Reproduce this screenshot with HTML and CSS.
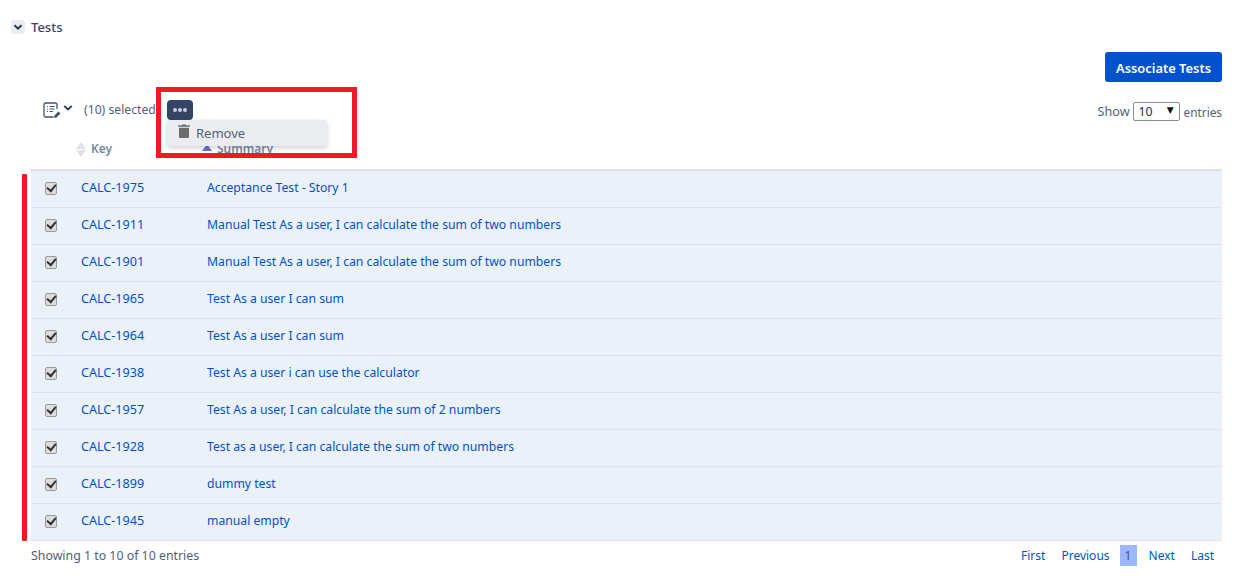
FILE: index.html
```html
<!DOCTYPE html>
<html lang="en">
<head>
<meta charset="utf-8">
<title>Tests</title>
<link rel="stylesheet" href="styles.css">
</head>
<body>
<main class="page">
  <header class="section-head">
    <span class="toggle"><svg width="10" height="10" viewBox="0 0 10 10"><path d="M1.500 3.200 5 6.700l3.500-3.500" fill="none" stroke="#253858" stroke-width="2"/></svg></span>
    <h2 class="section-title">Tests</h2>
  </header>
  <div class="actions"><button class="primary">Associate Tests</button></div>
  <div class="toolbar">
    <div class="bulk">
      <svg class="note-icon" width="18" height="17" viewBox="0 0 18 17"><path d="M10.500 15H2.500A1.500 1.500 0 0 1 1 13.500V2.500A1.500 1.500 0 0 1 2.500 1h10A1.500 1.500 0 0 1 14 2.500V7" fill="none" stroke="#42526e" stroke-width="1.300"/><path d="M4 4.500h1M6.500 4.500H11.500M4 7h1M6.500 7H11.500M4 9.500h1M6.500 9.500H10" stroke="#42526e" stroke-width="1.100"/><path d="M11 16l.5-2.500 4-4 2 2-4 4z" fill="#42526e"/></svg>
      <svg class="caret" width="10" height="10" viewBox="0 0 10 10"><path d="M1.200 2.800 5 6.500l3.800-3.700" fill="none" stroke="#253858" stroke-width="1.800"/></svg>
      <span class="selected">(10) selected</span>
      <div class="menu-wrap">
        <button class="more"><i></i><i></i><i></i></button>
        <div class="menu">
          <svg width="12" height="14" viewBox="0 0 12 14"><path d="M4 1.200V.4h4v.8h3.800v1.600H.2V1.200zM1 3.800h10V13a1 1 0 0 1-1 1H2a1 1 0 0 1-1-1z" fill="#6b6b6b"/></svg>
          <span>Remove</span>
        </div>
      </div>
    </div>
    <label class="length"><span class="show-word">Show</span> <span class="select-wrap"><select class="length-select"><option>10</option></select></span> <span class="entries-word">entries</span></label>
  </div>
  <table class="grid">
    <thead>
      <tr>
        <th class="c-check"></th>
        <th class="c-key"><span class="sort"><b class="up"></b><b class="down"></b></span>Key</th>
        <th class="c-sum"><span class="sort sum-sort"><b class="up active"></b></span>Summary</th>
      </tr>
    </thead>
    <tbody>
      <tr><td class="c-check"><input type="checkbox" checked></td><td class="key"><a href="#">CALC-1975</a></td><td><a href="#">Acceptance Test - Story 1</a></td></tr>
      <tr><td class="c-check"><input type="checkbox" checked></td><td class="key"><a href="#">CALC-1911</a></td><td><a href="#">Manual Test As a user, I can calculate the sum of two numbers</a></td></tr>
      <tr><td class="c-check"><input type="checkbox" checked></td><td class="key"><a href="#">CALC-1901</a></td><td><a href="#">Manual Test As a user, I can calculate the sum of two numbers</a></td></tr>
      <tr><td class="c-check"><input type="checkbox" checked></td><td class="key"><a href="#">CALC-1965</a></td><td><a href="#">Test As a user I can sum</a></td></tr>
      <tr><td class="c-check"><input type="checkbox" checked></td><td class="key"><a href="#">CALC-1964</a></td><td><a href="#">Test As a user I can sum</a></td></tr>
      <tr><td class="c-check"><input type="checkbox" checked></td><td class="key"><a href="#">CALC-1938</a></td><td><a href="#">Test As a user i can use the calculator</a></td></tr>
      <tr><td class="c-check"><input type="checkbox" checked></td><td class="key"><a href="#">CALC-1957</a></td><td><a href="#">Test As a user, I can calculate the sum of 2 numbers</a></td></tr>
      <tr><td class="c-check"><input type="checkbox" checked></td><td class="key"><a href="#">CALC-1928</a></td><td><a href="#">Test as a user, I can calculate the sum of two numbers</a></td></tr>
      <tr><td class="c-check"><input type="checkbox" checked></td><td class="key"><a href="#">CALC-1899</a></td><td><a href="#">dummy test</a></td></tr>
      <tr><td class="c-check"><input type="checkbox" checked></td><td class="key"><a href="#">CALC-1945</a></td><td><a href="#">manual empty</a></td></tr>
    </tbody>
  </table>
  <footer class="table-foot">
    <span class="info">Showing 1 to 10 of 10 entries</span>
    <nav class="pager"><a href="#">First</a><a href="#">Previous</a><a href="#" class="current">1</a><a href="#">Next</a><a href="#">Last</a></nav>
  </footer>
</main>
<div class="mark-box"></div>
<div class="mark-bar"></div>
</body>
</html>
```
FILE: styles.css
```css
* { box-sizing: border-box; }
html, body { margin: 0; height: 583px; overflow: hidden; background: #fff; }
body { font-family: "Noto Sans", sans-serif; font-size: 12.2px; color: #505f79; position: relative; }
.page { width: 1222px; padding: 18px 0 0 11px; }
.section-head { display: flex; align-items: center; height: 18px; gap: 6px; }
.toggle { width: 14px; height: 14px; border-radius: 3px; background: #ebecf0; display: flex; align-items: center; justify-content: center; }
.section-title { margin: 0; font-size: 13px; font-weight: 500; color: #344563; }
.actions { display: flex; justify-content: flex-end; margin-top: 16px; }
.primary { width: 117px; height: 30px; border: 0; border-radius: 3px; background: #0052cc; color: #fff; font: 600 12.9px "Noto Sans", sans-serif; padding: 2px 0 0; }
.toolbar { display: flex; justify-content: space-between; align-items: center; height: 32px; margin-top: 12px; padding-left: 32px; }
.bulk { display: flex; align-items: center; }
.note-icon { margin-right: 2px; }
.caret { margin: -4px 11px 0 0; }
.selected { width: 83px; white-space: nowrap; margin-top: -1px; }
.menu-wrap { position: relative; }
.more { width: 26px; height: 20px; border: 0; border-radius: 4px; background: #344563; display: flex; align-items: center; justify-content: center; gap: 1px; padding: 0; }
.more i { width: 4px; height: 4px; border-radius: 50%; background: #c9d0dc; }
.menu { position: absolute; left: 0; top: 20px; z-index: 2; width: 160px; height: 26px; background: #ebecf0; border-radius: 3px; box-shadow: 0 2px 5px rgba(9,30,66,.2); display: flex; align-items: center; gap: 6px; padding: 0 0 0 11px; font-size: 13px; color: #505f79; }
.menu svg { margin-top: -5px; }
.length { display: flex; align-items: center; gap: 3px; margin-top: 3px; }
.show-word { font-size: 12.6px; }
.entries-word { font-size: 11.8px; margin-left: 1px; }
.select-wrap { position: relative; display: block; }
.select-wrap::after { content: "▼"; position: absolute; right: 6px; top: 3px; font-size: 9px; color: #111; font-family: "DejaVu Sans", sans-serif; pointer-events: none; }
.length-select { display: block; appearance: none; width: 47px; height: 19px; font: 12.2px "Noto Sans", sans-serif; color: #172b4d; background: #fff; border: 1px solid #8c8c8c; border-radius: 2px; padding: 0 0 0 5px; margin: 0; }
.grid { width: 1191px; margin-left: 20px; border-collapse: collapse; table-layout: fixed; margin-top: 2px; }
.grid th { height: 42px; padding: 0 0 12px; vertical-align: bottom; text-align: left; font-size: 12px; font-weight: 600; color: #7a869a; border-bottom: 2px solid #dfe1e6; white-space: nowrap; }
.grid td { height: 37px; padding: 0 0 2px; background: #ebf1f9; border-bottom: 1px solid #dfe1e6; }
.c-check { width: 50px; padding-left: 14px !important; }
.c-key { width: 126px; }
.key { font-size: 12.6px; }
.c-check input { appearance: none; position: relative; display: block; margin: 1px 0 0; width: 12px; height: 13px; background: #dcdcdc; border: 1px solid #9a9a9a; border-radius: 2px; }
.c-check input::before { content: ""; position: absolute; left: 1px; top: 1.500px; width: 7px; height: 4px; border-left: 2px solid #333; border-bottom: 2px solid #333; transform: rotate(-50deg); }
.grid a { color: #0052cc; text-decoration: none; }
.sort { display: inline-flex; flex-direction: column; gap: 1px; vertical-align: middle; margin: 0 5px 0 -5px; }
.sum-sort { margin: -5px 5px 0 -5px; }
.sort b { display: block; width: 0; height: 0; border-left: 5px solid transparent; border-right: 5px solid transparent; }
.sort .up { border-bottom: 7px solid #dfe1e6; }
.sort .down { border-top: 7px solid #dfe1e6; }
.sort .active { border-bottom-color: #6c6fd1; }
.table-foot { display: flex; justify-content: space-between; align-items: center; margin: 4px 0 0 20px; height: 22px; }
.info { font-size: 12.35px; }
.pager { display: flex; align-items: center; font-size: 12px; }
.pager a { padding: 0 8px; height: 21px; line-height: 21px; color: #0052cc; text-decoration: none; }
.pager .current { background: #9ab8fb; color: #42526e; padding: 0; width: 17px; text-align: center; margin: 0 4px 0 2px; }
.mark-box { position: absolute; left: 156px; top: 87px; width: 201px; height: 71px; border: 5px solid #ed1c24; z-index: 3; }
.mark-bar { position: absolute; left: 22px; top: 174px; width: 5px; height: 367px; background: #ed1c24; border-radius: 1px; }
```
